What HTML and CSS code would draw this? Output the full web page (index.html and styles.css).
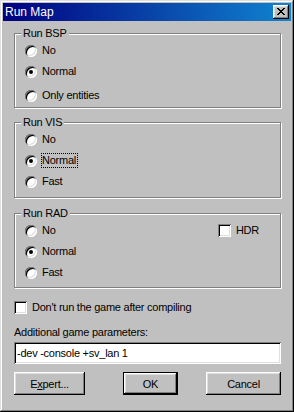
FILE: index.html
```html
<!DOCTYPE html>
<html lang="en">
  <head>
    <meta charset="UTF-8" />
    <meta name="viewport" content="width=device-width, initial-scale=1.0" />
    <title>Run Map</title>
    <link rel="stylesheet" href="styles.css">
  </head>
  <body>
    <div class="window">
      <div class="titlebar">
        <span class="title">Run Map</span>
        <button class="close" aria-label="Close">
          <svg width="8" height="7" viewBox="0 0 8 7">
            <path d="M0 0h2v1h1v1h2v-1h1v-1h2v1h-1v1h-1v1h-1v1h1v1h1v1h1v1h-2v-1h-1v-1h-2v1h-1v1h-2v-1h1v-1h1v-1h1v-1h-1v-1h-1v-1h-1z" fill="#000"/>
          </svg>
        </button>
      </div>

      <div class="content">
        <fieldset class="group group-bsp">
          <legend>Run BSP</legend>
          <div class="row"><span class="radio"></span><span class="txt">No</span></div>
          <div class="row"><span class="radio checked"></span><span class="txt">Normal</span></div>
          <div class="row row-gap"><span class="radio"></span><span class="txt">Only entities</span></div>
        </fieldset>

        <fieldset class="group group-vis">
          <legend>Run VIS</legend>
          <div class="row"><span class="radio"></span><span class="txt">No</span></div>
          <div class="row"><span class="radio checked"></span><span class="txt focus">Normal</span></div>
          <div class="row"><span class="radio"></span><span class="txt">Fast</span></div>
        </fieldset>

        <fieldset class="group group-rad">
          <legend>Run RAD</legend>
          <div class="rad-cols">
            <div class="rad-radios">
              <div class="row"><span class="radio"></span><span class="txt">No</span></div>
              <div class="row"><span class="radio checked"></span><span class="txt">Normal</span></div>
              <div class="row"><span class="radio"></span><span class="txt">Fast</span></div>
            </div>
            <div class="row hdr"><span class="check"></span><span class="txt">HDR</span></div>
          </div>
        </fieldset>

        <div class="row dont-run"><span class="check"></span><span class="txt">Don't run the game after compiling</span></div>

        <div class="param-label">Additional game parameters:</div>
        <input class="param-input" type="text" value="-dev -console +sv_lan 1" />

        <div class="buttons">
          <button class="btn btn-expert">E<u>x</u>pert...</button>
          <button class="btn btn-ok">OK</button>
          <button class="btn btn-cancel">Cancel</button>
        </div>
      </div>
    </div>
  </body>
</html>
```

FILE: styles.css
```css
html,
body {
  margin: 0;
  padding: 0;
  background-color: #c0c0c0;
}

body {
  font-family: 'Liberation Sans', Arial, sans-serif;
  font-size: 11px;
  letter-spacing: -0.25px;
  color: #000;
}

.window {
  width: 294px;
  height: 412px;
  box-sizing: border-box;
  padding: 3px;
  background-color: #c0c0c0;
  box-shadow: inset -1px -1px #000, inset 1px 1px #dfdfdf,
    inset -2px -2px #808080, inset 2px 2px #fff;
}

.titlebar {
  height: 18px;
  display: flex;
  align-items: center;
  justify-content: space-between;
  padding: 0 2px 0 2px;
  background: linear-gradient(to right, #000080, #1084d0);
  color: #fff;
}

.title {
  font-size: 12px;
  letter-spacing: 0;
  line-height: 18px;
}

.close {
  width: 16px;
  height: 14px;
  padding: 0;
  border: none;
  background-color: #c0c0c0;
  display: flex;
  align-items: center;
  justify-content: center;
  box-shadow: inset -1px -1px #000, inset 1px 1px #fff,
    inset -2px -2px #808080, inset 2px 2px #dfdfdf;
}

.close svg {
  display: block;
  margin: 0 1px 1px 0;
}

.content {
  padding: 0 10px 0 11px;
}

.group {
  margin: 0;
  min-width: 0;
  padding: 0 8px 0 10px;
  border: 1px solid #808080;
  box-shadow: 1px 1px 0 #fff, inset 1px 1px 0 #fff;
}

.group legend {
  margin-left: -4px;
  padding: 0 2px;
  line-height: 14px;
  background-color: #c0c0c0;
}

.group-bsp {
  margin-top: 5px;
  padding-bottom: 1px;
}

.group-vis {
  margin-top: 7px;
  padding-bottom: 5px;
}

.group-rad {
  margin-top: 8px;
  padding-bottom: 4px;
}

.row {
  height: 21px;
  display: flex;
  align-items: center;
  gap: 4px;
}

.row-gap {
  margin-top: 3px;
}

.txt {
  border: 1px dotted transparent;
  line-height: 13px;
  padding: 0 1px 0 0;
}

.txt.focus {
  border-color: #000;
}

.radio {
  position: relative;
  flex: none;
  width: 12px;
  height: 12px;
  border-radius: 50%;
  background-color: #fff;
  box-shadow: inset 1px 1px #808080, inset -1px -1px #fff,
    inset 2px 2px #000, inset -2px -2px #dfdfdf;
}

.radio.checked::after {
  content: '';
  position: absolute;
  left: 4px;
  top: 4px;
  width: 4px;
  height: 4px;
  border-radius: 50%;
  background-color: #000;
}

.check {
  flex: none;
  width: 13px;
  height: 13px;
  background-color: #fff;
  box-shadow: inset 1px 1px #808080, inset -1px -1px #fff,
    inset 2px 2px #000, inset -2px -2px #dfdfdf;
}

.rad-cols {
  display: flex;
  align-items: flex-start;
}

.rad-radios {
  flex: 1;
}

.hdr {
  margin-right: 11px;
}

.dont-run {
  margin-top: 9px;
}

.param-label {
  margin-top: 7px;
  line-height: 14px;
}

.param-input {
  display: block;
  box-sizing: border-box;
  width: 100%;
  height: 22px;
  margin: 3px 0 0 0;
  padding: 0 3px;
  border: none;
  outline: none;
  background-color: #fff;
  font-family: inherit;
  font-size: 11px;
  letter-spacing: -0.25px;
  color: #000;
  box-shadow: inset 1px 1px #808080, inset -1px -1px #fff,
    inset 2px 2px #000, inset -2px -2px #dfdfdf;
}

.buttons {
  display: flex;
  margin-top: 8px;
}

.btn {
  box-sizing: border-box;
  height: 23px;
  padding: 0;
  border: none;
  background-color: #c0c0c0;
  font-family: inherit;
  font-size: 11px;
  letter-spacing: -0.25px;
  color: #000;
  box-shadow: inset -1px -1px #000, inset 1px 1px #fff,
    inset -2px -2px #808080, inset 2px 2px #dfdfdf;
}

.btn-expert {
  width: 71px;
}

.btn-ok {
  width: 55px;
  margin-left: 38px;
  border: 1px solid #000;
}

.btn-cancel {
  width: 75px;
  margin-left: auto;
}
```
